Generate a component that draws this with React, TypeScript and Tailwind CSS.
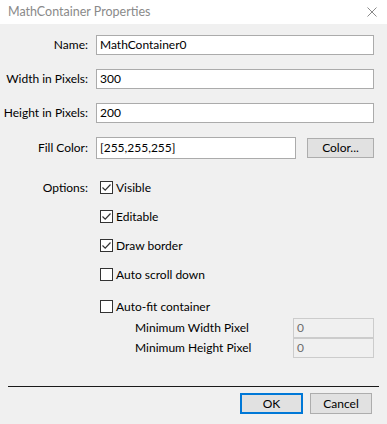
import React from 'react';

const font = { fontFamily: 'Lato, "Liberation Sans", sans-serif' };

const Check = ({ checked }: { checked: boolean }) => (
  <span className="flex h-[13px] w-[13px] shrink-0 items-center justify-center border border-[#333333] bg-white">
    {checked && (
      <svg width="11" height="11" viewBox="0 0 11 11" fill="none">
        <path d="M1.5 5.5 L4.2 8.2 L9.5 2.5" stroke="#333333" strokeWidth="1.2" />
      </svg>
    )}
  </span>
);

const Field = ({ label, value }: { label: string; value: string }) => (
  <div className="flex h-[20px] items-center">
    <div className="w-[88px] whitespace-nowrap text-right">{label}</div>
    <div className="ml-[8px] flex h-[20px] w-[278px] items-center border border-[#ababab] bg-white pl-[3px]">{value}</div>
  </div>
);

const options = [
  { label: 'Visible', checked: true },
  { label: 'Editable', checked: true },
  { label: 'Draw border', checked: true },
  { label: 'Auto scroll down', checked: false },
];

export default function App() {
  return (
    <div className="h-[424px] w-[387px] bg-[#f0f0f0] text-[12px] leading-[16px] text-black" style={font}>
      {/* title bar */}
      <div className="flex h-[24px] items-center justify-between bg-white pl-[8px] pr-[10px]">
        <span className="text-[12.5px] text-[#8a8a8a]">MathContainer Properties</span>
        <svg width="10" height="10" viewBox="0 0 10 10">
          <path d="M0.5 0.5 L9.5 9.5 M9.5 0.5 L0.5 9.5" stroke="#8a8a8a" strokeWidth="1" />
        </svg>
      </div>

      <div className="flex flex-col gap-[14px] pt-[11px]">
        <Field label="Name:" value="MathContainer0" />
        <Field label="Width in Pixels:" value="300" />
        <Field label="Height in Pixels:" value="200" />
        <div className="flex h-[22px] items-center">
          <div className="w-[88px] text-right">Fill Color:</div>
          <div className="ml-[8px] flex h-[22px] w-[200px] items-center border border-[#ababab] bg-white pl-[3px]">
            [255,255,255]
          </div>
          <button className="ml-[11px] flex h-[20px] w-[67px] items-center justify-center border border-[#adadad] bg-[#e1e1e1]">
            Color...
          </button>
        </div>
      </div>

      {/* options */}
      <div className="mt-[22px] flex">
        <div className="w-[88px] text-right leading-[13px]">Options:</div>
        <div className="ml-[12px] flex flex-col gap-[16px]">
          {options.map(o => (
            <div key={o.label} className="flex h-[13px] items-center gap-[3px]">
              <Check checked={o.checked} />
              <span>{o.label}</span>
            </div>
          ))}
          <div className="mt-[3px] flex h-[13px] items-center gap-[3px]">
            <Check checked={false} />
            <span>Auto-fit container</span>
          </div>
        </div>
      </div>

      <div className="mt-[5px] flex flex-col pl-[135px]">
        <div className="flex h-[20px] items-center justify-between pr-[13px]">
          <span>Minimum Width Pixel</span>
          <div className="flex h-[20px] w-[81px] items-center border border-[#cccccc] bg-[#f0f0f0] pl-[3px] text-[#6d6d6d]">0</div>
        </div>
        <div className="flex h-[20px] items-center justify-between pr-[13px]">
          <span>Minimum Height Pixel</span>
          <div className="flex h-[20px] w-[81px] items-center border border-[#cccccc] bg-[#f0f0f0] pl-[3px] text-[#6d6d6d]">0</div>
        </div>
      </div>

      <div className="mx-[8px] mt-[28px] h-px bg-[#1a1a1a]" />

      <div className="mt-[6px] flex justify-end gap-[7px] pr-[15px]">
        <button className="flex h-[21px] w-[63px] items-center justify-center border-2 border-[#0078d7] bg-[#e1e1e1]">OK</button>
        <button className="flex h-[21px] w-[62px] items-center justify-center border border-[#adadad] bg-[#e1e1e1]">Cancel</button>
      </div>
    </div>
  );
}
